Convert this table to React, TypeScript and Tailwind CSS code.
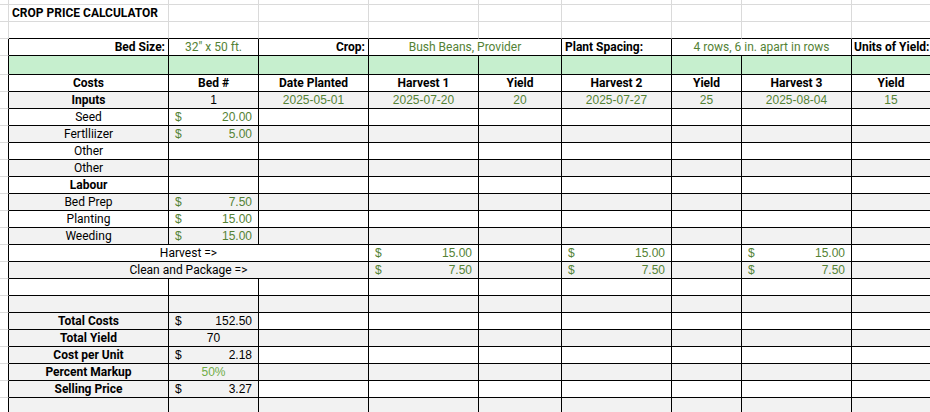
import type { ReactNode } from 'react';

// column template: A(gutter) B C D E F G H I J
const COLS = 'grid grid-cols-[9px_160px_90px_110px_110px_83px_110px_70px_110px_78px]';

const LABEL = "font-['Roboto',sans-serif] text-[12px]";
const NUM = "font-['Liberation_Sans',Arial,sans-serif] text-[12px]";
const GREEN = 'text-[#548235]';
const GRAY = 'bg-[#f2f2f2]';
const MINT = 'bg-[#c6efce]';

const SPAN: Record<number, string> = { 1: '', 2: 'col-span-2', 3: 'col-span-3', 9: 'col-span-9' };

interface CellProps {
    span?: number;
    bg?: string;
    className?: string;
    last?: boolean;
    light?: boolean;
    children?: ReactNode;
}

// a single sheet cell with right and bottom border
const Cell = ({ span = 1, bg = '', className = '', last = false, light = false, children }: CellProps) => (
    <div
        className={`${SPAN[span]} ${bg} ${light ? 'border-[#dadada]' : 'border-black'} border-b ${last ? '' : 'border-r'} flex items-center overflow-hidden whitespace-nowrap ${className}`}
    >
        {children}
    </div>
);

// gutter column left of the table
const Gutter = ({ table = true }: { table?: boolean }) => (
    <div className={`border-b border-b-[#dadada] border-r ${table ? 'border-r-black' : 'border-r-[#dadada]'}`} />
);

const Acct = ({ value, green = true }: { value: string; green?: boolean }) => (
    <div className={`flex w-full justify-between px-[6px] ${NUM} ${green ? GREEN : 'text-black'}`}>
        <span>$</span>
        <span>{value}</span>
    </div>
);

const Center = ({ children, bold = false, num = false, green = false }: { children: ReactNode; bold?: boolean; num?: boolean; green?: boolean }) => (
    <div className={`w-full text-center ${num ? NUM : LABEL} ${bold ? 'font-bold' : ''} ${green ? GREEN : 'text-black'}`}>{children}</div>
);

// the standard body row: label in B, value in C, the rest empty
const BodyRow = ({ label, bold = false, value, gray = false, labelGray = false }: { label: string; bold?: boolean; value?: ReactNode; gray?: boolean; labelGray?: boolean }) => {
    const bg = gray ? GRAY : '';
    const lbg = gray || labelGray ? GRAY : '';
    return (
        <div className={`${COLS} h-[17px]`}>
            <Gutter />
            <Cell bg={lbg}>
                <Center bold={bold}>{label}</Center>
            </Cell>
            <Cell bg={lbg}>{value}</Cell>
            <Cell bg={bg} />
            <Cell bg={bg} />
            <Cell bg={bg} />
            <Cell bg={bg} />
            <Cell bg={bg} />
            <Cell bg={bg} />
            <Cell bg={bg} last />
        </div>
    );
};

const HarvestRow = ({ label, value, gray = false }: { label: string; value: string; gray?: boolean }) => {
    const bg = gray ? GRAY : '';
    return (
        <div className={`${COLS} h-[17px]`}>
            <Gutter />
            <Cell span={3} bg={bg}>
                <Center>{label}</Center>
            </Cell>
            <Cell bg={bg}>
                <Acct value={value} />
            </Cell>
            <Cell bg={bg} />
            <Cell bg={bg}>
                <Acct value={value} />
            </Cell>
            <Cell bg={bg} />
            <Cell bg={bg}>
                <Acct value={value} />
            </Cell>
            <Cell bg={bg} last />
        </div>
    );
};

const EmptyRow = ({ gray = false, labelGray = false }: { gray?: boolean; labelGray?: boolean }) => (
    <BodyRow label="" gray={gray} labelGray={labelGray} />
);

export default function App() {
    const headers = ['Costs', 'Bed #', 'Date Planted', 'Harvest 1', 'Yield', 'Harvest 2', 'Yield', 'Harvest 3', 'Yield'];
    const inputs = ['2025-05-01', '2025-07-20', '20', '2025-07-27', '25', '2025-08-04', '15'];

    return (
        <div className="h-[412px] w-[930px] overflow-hidden bg-white">
            {/* sheet rows above the table */}
            <div className={`${COLS} h-[5px]`}>
                <Gutter table={false} />
                {Array.from({ length: 9 }).map((_, i) => (
                    <Cell key={i} light last={i === 8} />
                ))}
            </div>
            <div className={`${COLS} h-[17px]`}>
                <Gutter table={false} />
                <Cell light className="pl-[3px]">
                    <span className={`${LABEL} text-[11.5px] font-bold text-black`}>CROP PRICE CALCULATOR</span>
                </Cell>
                {Array.from({ length: 8 }).map((_, i) => (
                    <Cell key={i} light last={i === 7} />
                ))}
            </div>
            <div className={`${COLS} h-[17px]`}>
                <Gutter table={false} />
                {Array.from({ length: 9 }).map((_, i) => (
                    <div
                        key={i}
                        className={`border-b border-b-black ${i === 8 ? '' : 'border-r border-r-[#dadada]'}`}
                    />
                ))}
            </div>

            {/* Bed size / crop / spacing */}
            <div className={`${COLS} h-[17px]`}>
                <Gutter />
                <Cell className="justify-end pr-[3px]">
                    <span className={`${LABEL} font-bold text-black`}>Bed Size:</span>
                </Cell>
                <Cell>
                    <Center green>32" x 50 ft.</Center>
                </Cell>
                <Cell className="justify-end pr-[3px]">
                    <span className={`${LABEL} font-bold text-black`}>Crop:</span>
                </Cell>
                <Cell span={2}>
                    <Center green>Bush Beans, Provider</Center>
                </Cell>
                <Cell className="pl-[3px]">
                    <span className={`${LABEL} font-bold text-black`}>Plant Spacing:</span>
                </Cell>
                <Cell span={2}>
                    <Center green>4 rows, 6 in. apart in rows</Center>
                </Cell>
                <Cell last className="pl-[2px]">
                    <span className={`${LABEL} font-bold text-black`}>Units of Yield:</span>
                </Cell>
            </div>

            {/* green spacer */}
            <div className={`${COLS} h-[19px]`}>
                <Gutter />
                {Array.from({ length: 9 }).map((_, i) => (
                    <Cell key={i} bg={MINT} last={i === 8} />
                ))}
            </div>

            {/* header */}
            <div className={`${COLS} h-[17px]`}>
                <Gutter />
                {headers.map((h, i) => (
                    <Cell key={i} last={i === 8}>
                        <Center bold>{h}</Center>
                    </Cell>
                ))}
            </div>

            {/* inputs row */}
            <div className={`${COLS} h-[17px]`}>
                <Gutter />
                <Cell bg={GRAY}>
                    <Center bold>Inputs</Center>
                </Cell>
                <Cell bg={GRAY}>
                    <Center num>1</Center>
                </Cell>
                {inputs.map((v, i) => (
                    <Cell key={i} bg={GRAY} last={i === 6}>
                        <Center num green>
                            {v}
                        </Center>
                    </Cell>
                ))}
            </div>

            <BodyRow label="Seed" value={<Acct value="20.00" />} />
            <BodyRow label="Fertlliizer" value={<Acct value="5.00" />} gray />
            <BodyRow label="Other" />
            <BodyRow label="Other" gray />
            <BodyRow label="Labour" bold />
            <BodyRow label="Bed Prep" value={<Acct value="7.50" />} gray />
            <BodyRow label="Planting" value={<Acct value="15.00" />} />
            <BodyRow label="Weeding" value={<Acct value="15.00" />} gray />

            <HarvestRow label="Harvest =>" value="15.00" />
            <HarvestRow label="Clean and Package =>" value="7.50" gray />

            <EmptyRow />
            <EmptyRow gray />

            {/* summary */}
            <BodyRow label="Total Costs" bold labelGray value={<Acct value="152.50" green={false} />} />
            <BodyRow label="Total Yield" bold gray value={<Center num>70</Center>} />
            <BodyRow label="Cost per Unit" bold labelGray value={<Acct value="2.18" green={false} />} />
            <BodyRow
                label="Percent Markup"
                bold
                gray
                value={
                    <div className={`w-full text-center ${NUM} text-[#70ad47]`}>50%</div>
                }
            />
            <BodyRow label="Selling Price" bold labelGray value={<Acct value="3.27" green={false} />} />
            <EmptyRow gray />
        </div>
    );
}
